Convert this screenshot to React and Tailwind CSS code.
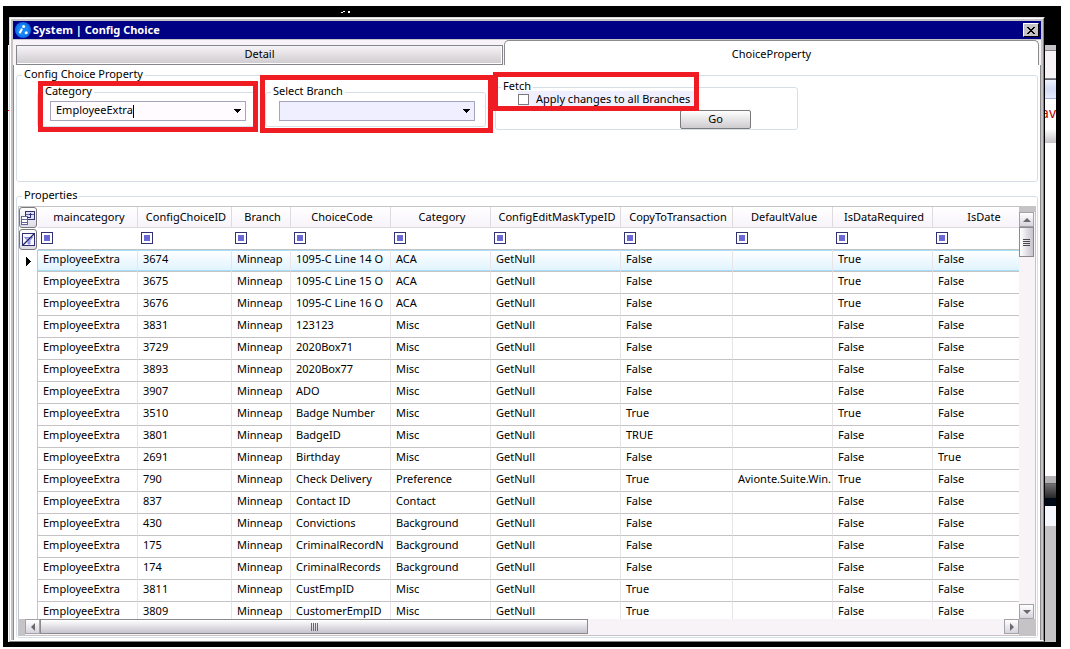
import React from 'react';

const columns = [
  { name: 'maincategory', width: 'w-[100px]' },
  { name: 'ConfigChoiceID', width: 'w-[94px]' },
  { name: 'Branch', width: 'w-[59px]' },
  { name: 'ChoiceCode', width: 'w-[100px]' },
  { name: 'Category', width: 'w-[100px]' },
  { name: 'ConfigEditMaskTypeID', width: 'w-[130px]' },
  { name: 'CopyToTransaction', width: 'w-[112px]' },
  { name: 'DefaultValue', width: 'w-[100px]' },
  { name: 'IsDataRequired', width: 'w-[100px]' },
  { name: 'IsDate', width: 'w-[100px]' },
];

// id, choice code, category, copy to transaction, default value, data required, is date
const records = [
  ['3674', '1095-C Line 14 O', 'ACA', 'False', '', 'True', 'False'],
  ['3675', '1095-C Line 15 O', 'ACA', 'False', '', 'True', 'False'],
  ['3676', '1095-C Line 16 O', 'ACA', 'False', '', 'True', 'False'],
  ['3831', '123123', 'Misc', 'False', '', 'False', 'False'],
  ['3729', '2020Box71', 'Misc', 'False', '', 'False', 'False'],
  ['3893', '2020Box77', 'Misc', 'False', '', 'False', 'False'],
  ['3907', 'ADO', 'Misc', 'False', '', 'False', 'False'],
  ['3510', 'Badge Number', 'Misc', 'True', '', 'True', 'False'],
  ['3801', 'BadgeID', 'Misc', 'TRUE', '', 'False', 'False'],
  ['2691', 'Birthday', 'Misc', 'False', '', 'False', 'True'],
  ['790', 'Check Delivery', 'Preference', 'True', 'Avionte.Suite.Win.', 'True', 'False'],
  ['837', 'Contact ID', 'Contact', 'False', '', 'False', 'False'],
  ['430', 'Convictions', 'Background', 'False', '', 'False', 'False'],
  ['175', 'CriminalRecordN', 'Background', 'False', '', 'False', 'False'],
  ['174', 'CriminalRecords', 'Background', 'False', '', 'False', 'False'],
  ['3811', 'CustEmpID', 'Misc', 'True', '', 'False', 'False'],
  ['3809', 'CustomerEmpID', 'Misc', 'True', '', 'False', 'False'],
];

const rows = records.map(([id, code, category, copy, value, required, date]) => [
  'EmployeeExtra', id, 'Minneap', code, category, 'GetNull', copy, value, required, date,
]);

const LogoIcon = () => (
  <svg width="16" height="16" viewBox="0 0 16 16" aria-hidden="true">
    <circle cx="8" cy="8" r="8" fill="#1071e7" />
    <circle cx="8" cy="8" r="6" fill="#1886f7" />
    <circle cx="8.6" cy="4.6" r="1.5" fill="#fff" />
    <path d="M6.6 7.4 5 10.400" stroke="#fff" strokeWidth="2.200" strokeLinecap="round" />
    <circle cx="11.2" cy="10.8" r="1.500" fill="#fff" />
  </svg>
);

const FieldChooserIcon = () => (
  <svg width="14" height="14" viewBox="0 0 14 14" shapeRendering="crispEdges" aria-hidden="true">
    <path d="M4.5 0.5h9v8h-9z" fill="#dedff7" stroke="#313073" />
    <path d="M5 3h8" stroke="#636594" />
    <path d="M0.5 5.5h6v8h-6z" fill="#fff" stroke="#636594" />
    <path d="M1 8.5h5M1 11h5" stroke="#636594" />
    <path d="M6 6.5h3.5v-4M7.5 4.5l2-2 2 2" fill="none" stroke="#313073" />
  </svg>
);

const ClearFilterIcon = () => (
  <svg width="13" height="13" viewBox="0 0 13 13" aria-hidden="true">
    <path d="M0.5 0.5h12v12h-12z" fill="#f7f7ff" stroke="#313073" shapeRendering="crispEdges" />
    <path d="M2.5 4.5h8L8 7.5V11H6V7.5z" fill="#b5b6f7" stroke="#6b69ce" strokeWidth="0.7" />
    <path d="M1 12 12 1" stroke="#212063" strokeWidth="1.2" />
  </svg>
);

const DropArrow = () => (
  <svg width="7" height="4" viewBox="0 0 7 4" shapeRendering="crispEdges" aria-hidden="true">
    <path d="M0 0h7L3.5 4z" fill="#000" />
  </svg>
);

const arrowPaths = {
  up: 'M0 6 4 2l4 4z',
  down: 'M0 2h8L4 6z',
  left: 'M6 0v8L2 4z',
  right: 'M2 0v8l4-4z',
};

const ScrollButton = ({ direction }) => (
  <button
    type="button"
    aria-label={`Scroll ${direction}`}
    className="flex h-[15px] w-[15px] shrink-0 items-center justify-center border border-[#a5a2a5] bg-linear-to-b from-white to-[#d6d3de]"
  >
    <svg width="8" height="8" viewBox="0 0 8 8" aria-hidden="true">
      <path d={arrowPaths[direction]} fill="#6b696b" />
    </svg>
  </button>
);

const Group = ({ title, className, children }) => (
  <fieldset className={`min-w-0 rounded-[3px] border border-[#d6dfe7] ${className}`}>
    <legend className="ml-[5px] px-[2px] pb-[2px] leading-[14px]">{title}</legend>
    {children}
  </fieldset>
);

const TitleBar = () => (
  <header className="flex h-[18px] items-center gap-[2px] bg-[#000084] px-[2px] text-white">
    <LogoIcon />
    <h1 className="flex-1 font-bold">System | Config Choice</h1>
    <button
      type="button"
      aria-label="Close"
      className="flex h-[14px] w-4 items-center justify-center border border-t-white border-r-black border-b-black border-l-white bg-[#c6c3c6]"
    >
      <svg width="8" height="7" viewBox="0 0 8 7" shapeRendering="crispEdges" aria-hidden="true">
        <path d="M0 0h2v1h1v1h2V1h1V0h2v1H7v1H6v1H5v1h1v1h1v1h1v1H6V6H5V5H3v1H2v1H0V6h1V5h1V4h1V3H2V2H1V1H0z" fill="#000" />
      </svg>
    </button>
  </header>
);

const Tabs = () => (
  <div role="tablist" className="flex items-end border-t border-[#c6c3c6] bg-[#f7f3f7] pr-[2px] pl-[3px]">
    <button
      type="button"
      role="tab"
      aria-selected="false"
      className="h-5 w-[487px] border border-[#84868c] bg-linear-to-b from-[#f7f3f7] to-[#cecbce] pb-[2px] leading-[14px] shadow-[inset_-1px_-1px_0_#ffffff]"
    >
      Detail
    </button>
    <button
      type="button"
      role="tab"
      aria-selected="true"
      className="ml-px h-[25px] flex-1 rounded-t-[5px] border border-b-0 border-[#8c8a8c] bg-white pt-[2px]"
    >
      ChoiceProperty
    </button>
  </div>
);

const FilterPanel = () => (
  <Group title="Config Choice Property" className="h-[115px]">
    <div className="flex pt-px pl-5">
      <div className="relative mr-2 h-[46px] w-[220px]">
        <Group title="Category" className="h-[43px]">
          <div className="relative mt-[1px] ml-3 flex h-5 w-[196px] items-center border border-[#a5a6bd] bg-[#fffbff] pr-1">
            <input
              aria-label="Category"
              defaultValue="EmployeeExtra"
              className="min-w-0 flex-1 bg-transparent pb-[2px] pl-[5px] outline-none"
            />
            <span className="absolute left-[82px] h-[13px] w-px bg-black" />
            <button type="button" aria-label="Open category list">
              <DropArrow />
            </button>
          </div>
        </Group>
        <div className="pointer-events-none absolute -top-[3px] left-px h-[51px] w-[220px] border-5 border-[#ef1c24]" />
      </div>
      <div className="relative mr-[9px] h-[46px] w-[221px]">
        <Group title="Select Branch" className="h-[43px]">
          <div className="relative mt-[1px] ml-[13px] flex h-5 w-[196px] items-center justify-end border border-[#a5a6bd] bg-[#efefff] pr-1">
            <select aria-label="Select Branch" className="absolute inset-0 appearance-none bg-transparent">
              <option></option>
            </select>
            <DropArrow />
          </div>
        </Group>
        <div className="pointer-events-none absolute -top-[9px] -left-[5px] h-[58px] w-[233px] border-5 border-[#ef1c24]" />
      </div>
      <div className="relative -mt-[5px] w-[303px]">
        <Group title="Fetch" className="h-[51px]">
          <label className="-mt-[4px] ml-[22px] flex h-4 w-[177px] items-center gap-[7px] bg-[#efefff]">
            <input type="checkbox" className="h-[11px] w-[11px] appearance-none border border-[#7b797b] bg-white" />
            Apply changes to all Branches
          </label>
          <button
            type="button"
            className="mt-[3px] ml-[184px] block h-[19px] w-[71px] rounded-[2px] border border-[#7b797b] bg-linear-to-b from-white to-[#cecbce] pb-[2px] leading-[15px]"
          >
            Go
          </button>
        </Group>
        <div className="pointer-events-none absolute -top-[7px] -left-[2px] h-[39px] w-[206px] border-5 border-[#ef1c24]" />
      </div>
    </div>
  </Group>
);

const gridLine = 'border-r border-r-[#e7e3e7] border-b border-b-[#c6c3c6]';

const PropertyTable = () => (
  <table className="w-[1014px] table-fixed border-separate border-spacing-0 text-left">
    <colgroup>
      <col className="w-[19px]" />
      {columns.map((col) => (
        <col key={col.name} className={col.width} />
      ))}
    </colgroup>
    <thead>
      <tr className="h-[21px]">
        <td className="p-0">
          <button
            type="button"
            aria-label="Choose columns"
            className="flex h-[21px] w-[18px] items-center justify-center rounded-[3px] border border-[#7b797b] bg-linear-to-b from-white to-[#dedbe7]"
          >
            <FieldChooserIcon />
          </button>
        </td>
        {columns.map((col) => (
          <th
            key={col.name}
            scope="col"
            className="border-r border-b border-[#dedbde] bg-linear-to-b from-white to-[#f7f3fa] p-0 pl-[3px] text-center font-normal"
          >
            {col.name}
          </th>
        ))}
      </tr>
      <tr className="h-[22px]">
        <td className="p-0">
          <button
            type="button"
            aria-label="Clear filters"
            className="flex h-[21px] w-[18px] items-center justify-center rounded-[3px] border border-[#7b797b] bg-linear-to-b from-white to-[#dedbe7]"
          >
            <ClearFilterIcon />
          </button>
        </td>
        {columns.map((col) => (
          <td key={col.name} className="border-b border-b-[#c6c3c6] p-0 pb-[2px] pl-[3px]">
            <button
              type="button"
              aria-label={`Filter ${col.name}`}
              className="block h-3 w-3 border border-[#313073] bg-white p-[2px]"
            >
              <span className="block h-[6px] bg-[#6b69d6]" />
            </button>
          </td>
        ))}
      </tr>
    </thead>
    <tbody>
      {rows.map((row, i) => (
        <tr key={row[1]} className="h-[22px]">
          <td className="border-r border-r-[#c6c3c6] p-0 pl-[7px]">
            {i === 0 && (
              <svg width="5" height="9" viewBox="0 0 5 9" shapeRendering="crispEdges" aria-hidden="true">
                <path d="M0 0v9l5-4.5z" fill="#000" />
              </svg>
            )}
          </td>
          {row.map((cell, j) => (
            <td
              key={columns[j].name}
              className={`overflow-hidden p-0 pb-[4px] pl-[5px] whitespace-nowrap ${gridLine} ${
                i === 0 ? 'bg-linear-to-b from-white to-[#def3ff] shadow-[inset_0_1px_0_#a5dff7,inset_0_-1px_0_#a5dff7]' : ''
              }`}
            >
              {cell}
            </td>
          ))}
        </tr>
      ))}
    </tbody>
  </table>
);

const PropertyGrid = () => (
  <div className="border border-[#c6c3c6]">
    <div className="flex h-[412px]">
      <div className="min-w-0 flex-1 overflow-hidden">
        <PropertyTable />
      </div>
      <div className="flex w-4 flex-col items-start bg-[#f7f3f7]">
        <div className="h-[5px] w-full bg-[#c6c3c6]" />
        <ScrollButton direction="up" />
        <div className="flex h-[30px] w-[15px] flex-col items-center justify-center gap-px border border-[#8c8a8c] bg-linear-to-r from-white to-[#c6c3ce]">
          <span className="h-px w-[7px] bg-[#4a494a]" />
          <span className="h-px w-[7px] bg-[#4a494a]" />
          <span className="h-px w-[7px] bg-[#4a494a]" />
          <span className="h-px w-[7px] bg-[#4a494a]" />
        </div>
        <div className="flex-1" />
        <ScrollButton direction="down" />
      </div>
    </div>
    <div className="flex h-4 bg-[#f7f3f7]">
      <div className="w-[6px] bg-[#c6c3c6]" />
      <ScrollButton direction="left" />
      <div className="flex h-[15px] w-[548px] items-center justify-center gap-px border border-[#8c8a8c] bg-linear-to-b from-white to-[#c6c3ce]">
        <span className="h-2 w-px bg-[#636584]" />
        <span className="h-2 w-px bg-[#636584]" />
        <span className="h-2 w-px bg-[#636584]" />
        <span className="h-2 w-px bg-[#636584]" />
      </div>
      <div className="flex-1" />
      <ScrollButton direction="right" />
      <div className="w-4 bg-[#c6c3c6]" />
    </div>
  </div>
);

// Slice of the parent window that shows past the dialog's right edge
const ParentEdge = () => (
  <div className="flex w-[11px] flex-col overflow-hidden bg-white">
    <div className="h-7 bg-black" />
    <div className="h-[6px] border-b border-[#848284] bg-[#c6c3c6]" />
    <div className="h-7 border-b border-[#848284] bg-[#f7f3f7]" />
    <div className="h-5 border-t border-b border-t-[#636573] border-b-[#a5b2d6] bg-linear-to-b from-[#eff3ff] via-[#d6dbf7] to-[#e7ebff]" />
    <div className="flex h-[30px] justify-end text-[14px] leading-[28px] text-[#c00000]">av</div>
    <div className="h-[14px] bg-linear-to-b from-white to-[#c6c3c6]" />
    <div className="h-[333px]" />
    <div className="h-2 border-b border-[#636163] bg-[#b5b2b5]" />
    <div className="h-[14px] bg-linear-to-b from-[#737173] to-[#292829]" />
    <div className="h-2 bg-[#000818]" />
    <div className="h-5 bg-[#f7f7ff]" />
    <div className="flex-1 bg-[#c6c3c6]" />
  </div>
);

const App = () => {
  return (
    <div className="bg-white pt-[6px] pr-[9px] pl-[3px] font-['Noto_Sans','Open_Sans',sans-serif] text-[11px] leading-[16px] text-black">
      <div className="border-5 border-t-0 border-black">
        <div className="flex h-[11px] bg-black pt-[5px] pl-[333px]">
          <svg width="10" height="2" viewBox="0 0 10 2" shapeRendering="crispEdges" aria-hidden="true">
            <path d="M0 1h2v1H0zM2 0h2v1H2zM7 0h2v2H7z" fill="#fff" />
          </svg>
        </div>
        <div className="flex">
          <div className="w-px bg-white">
            <div className="h-7 bg-black" />
            <div className="h-[65px]" />
            <div className="h-px bg-[#ef1c24]" />
          </div>
          <main className="min-w-0 flex-1 border border-t-[#dedbde] border-r-black border-b-[#848284] border-l-[#dedbde] bg-[#c6c3c6]">
            <div className="border border-t-white border-r-[#848284] border-b-white border-l-white">
              <div className="border-x-2 border-t-2 border-[#c6c3c6]">
                <TitleBar />
                <Tabs />
                <div className="border-x border-[#8c8a8c] bg-white px-[2px] pt-[2px] pb-[2px]">
                  <FilterPanel />
                  <div className="pt-[6px]">
                    <Group title="Properties" className="pb-px">
                      <div className="px-px pt-[2px]">
                        <PropertyGrid />
                      </div>
                    </Group>
                  </div>
                </div>
              </div>
            </div>
          </main>
          <ParentEdge />
        </div>
      </div>
    </div>
  );
};

export default App;
